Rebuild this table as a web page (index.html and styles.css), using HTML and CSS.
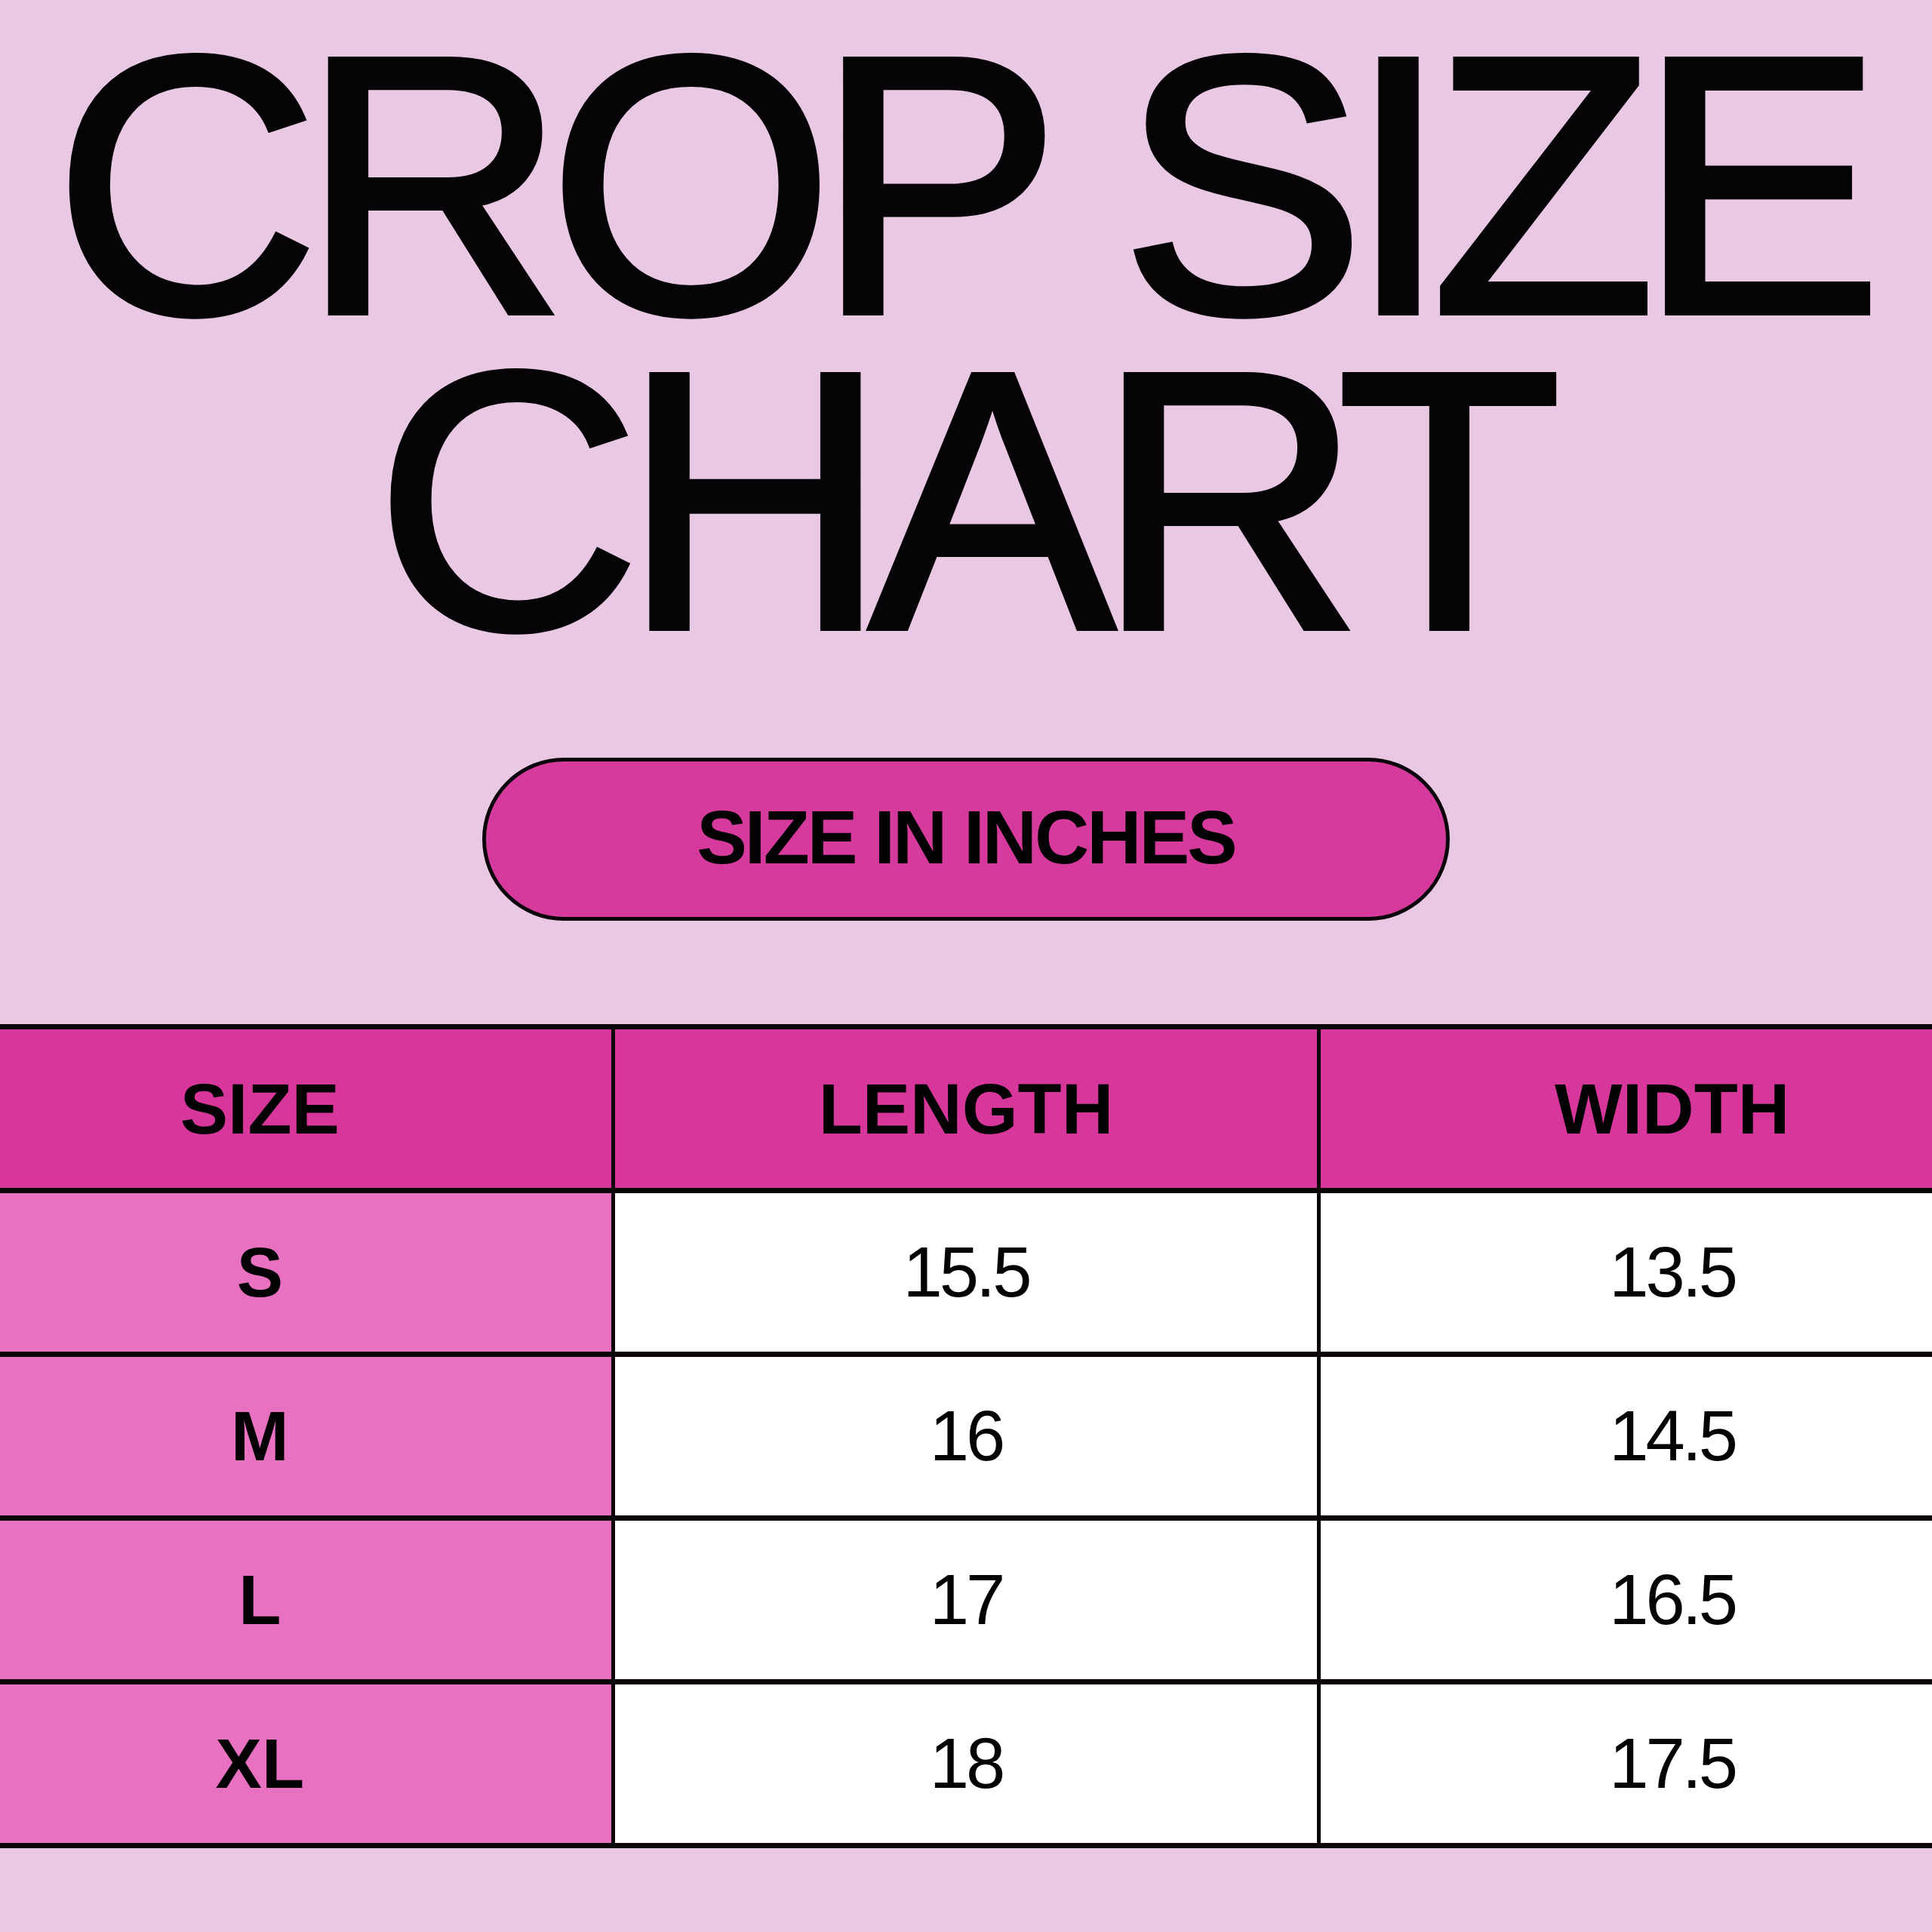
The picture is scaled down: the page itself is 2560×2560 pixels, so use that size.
FILE: index.html
```html
<!DOCTYPE html>
<html lang="en">
<head>
<meta charset="utf-8">
<title>Crop Size Chart</title>
<link rel="stylesheet" href="styles.css">
</head>
<body>
<main class="page">
  <h1 class="title"><span class="title-line">CROP SIZE</span><span class="title-line">CHART</span></h1>
  <div class="pill">SIZE IN INCHES</div>
  <div class="table-wrap">
    <table class="chart">
      <thead>
        <tr><th>SIZE</th><th>LENGTH</th><th>WIDTH</th></tr>
      </thead>
      <tbody>
        <tr><th class="size">S</th><td>15.5</td><td>13.5</td></tr>
        <tr><th class="size">M</th><td>16</td><td>14.5</td></tr>
        <tr><th class="size">L</th><td>17</td><td>16.5</td></tr>
        <tr><th class="size">XL</th><td>18</td><td>17.5</td></tr>
      </tbody>
    </table>
  </div>
</main>
</body>
</html>
```

FILE: styles.css
```css
html, body {
  margin: 0;
  padding: 0;
}
body {
  background: #e9c8e4;
  font-family: "Liberation Sans", Arial, sans-serif;
  color: #050205;
  width: 2560px;
  height: 2560px;
  overflow: hidden;
}
.page {
  display: flex;
  flex-direction: column;
  align-items: center;
  padding-top: 36px;
}
.title {
  margin: 0;
  display: flex;
  flex-direction: column;
  align-items: center;
  font-weight: 400;
  font-size: 487px;
  line-height: 418px;
  letter-spacing: -24px;
  color: #060306;
  -webkit-text-stroke: 8px #060306;
}
.title-line {
  display: block;
  margin-right: 18px;
}
.pill {
  margin-top: 132px;
  box-sizing: border-box;
  width: 1282px;
  height: 216px;
  border: 5px solid #0a030a;
  border-radius: 108px;
  background: #d63a9d;
  display: flex;
  align-items: center;
  justify-content: center;
  font-weight: 700;
  font-size: 100px;
  letter-spacing: -3px;
  padding-bottom: 6px;
}
.table-wrap {
  margin-top: 137px;
  width: 2560px;
  display: flex;
  justify-content: center;
}
.chart {
  flex: none;
  width: 2812px;
  border-collapse: collapse;
  table-layout: fixed;
}
.chart th, .chart td {
  height: 210px;
  padding: 0;
  text-align: center;
  vertical-align: middle;
  border-top: 7px solid #0a0509;
  border-bottom: 7px solid #0a0509;
  border-left: 5px solid #0a0509;
  border-right: 5px solid #0a0509;
}
.chart thead th {
  background: #d7379a;
  font-weight: 700;
  font-size: 95px;
}
.chart tbody th.size {
  background: #e971c1;
  font-weight: 700;
  font-size: 92px;
}
.chart tbody td {
  background: #ffffff;
  font-weight: 400;
  font-size: 94px;
  letter-spacing: -4px;
}
```
